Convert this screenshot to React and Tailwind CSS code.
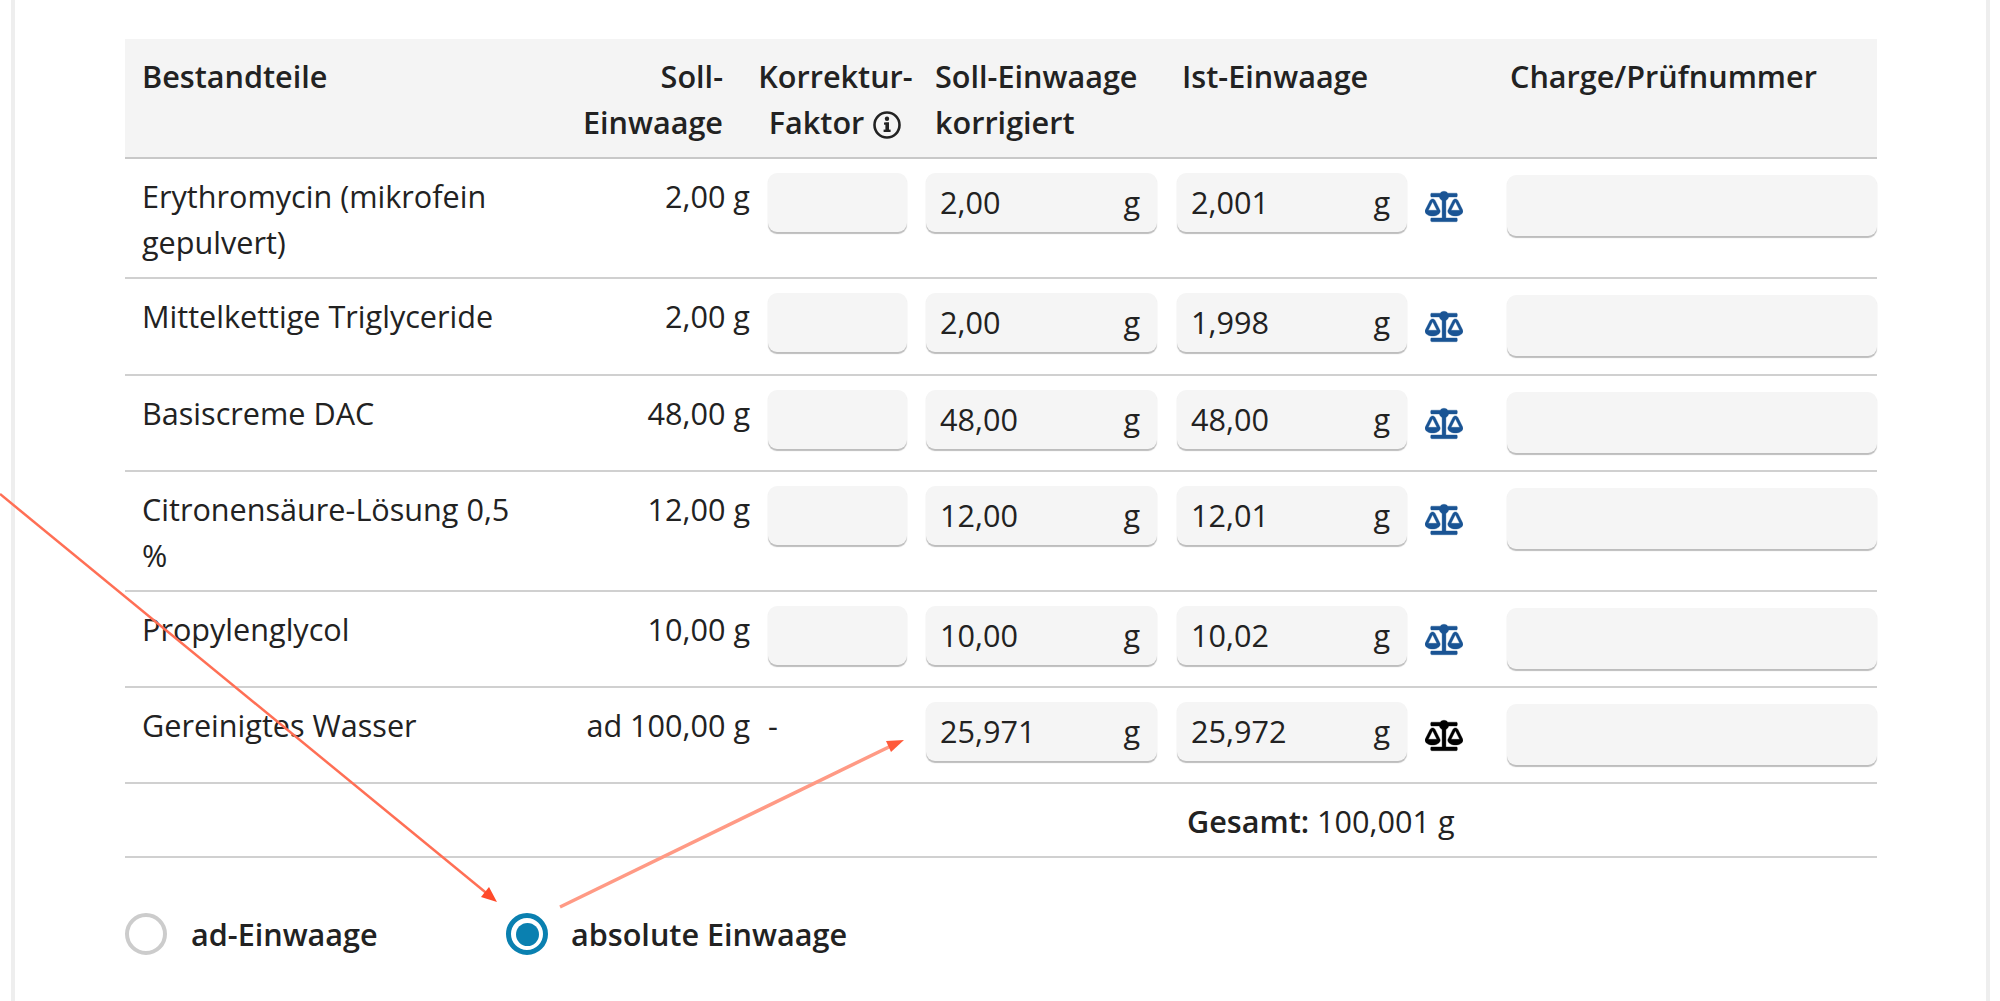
import { FaBalanceScale } from "react-icons/fa";

const rows = [
  { name: "Erythromycin (mikrofein gepulvert)", soll: "2,00 g", korr: "2,00", ist: "2,001", h: "h-[120px]" },
  { name: "Mittelkettige Triglyceride", soll: "2,00 g", korr: "2,00", ist: "1,998", h: "h-[97px]" },
  { name: "Basiscreme DAC", soll: "48,00 g", korr: "48,00", ist: "48,00", h: "h-[96px]" },
  { name: "Citronensäure-Lösung 0,5 %", soll: "12,00 g", korr: "12,00", ist: "12,01", h: "h-[120px]" },
  { name: "Propylenglycol", soll: "10,00 g", korr: "10,00", ist: "10,02", h: "h-[96px]" },
  { name: "Gereinigtes Wasser", soll: "ad 100,00 g", korr: "25,971", ist: "25,972", h: "h-[96px]", ad: true },
];

function InfoIcon() {
  return (
    <svg viewBox="0 0 30 30" className="inline-block w-[30px] h-[30px] ml-[8px] align-[-6px]">
      <circle cx="15" cy="15" r="12.5" fill="none" stroke="#222" strokeWidth="2.6" />
      <circle cx="15" cy="8.8" r="2.2" fill="#222" />
      <rect x="12" y="12.5" width="5" height="2.2" fill="#222" />
      <rect x="13.4" y="12.5" width="3.6" height="8.5" fill="#222" />
      <rect x="11.6" y="19.6" width="7" height="2.4" fill="#222" />
    </svg>
  );
}

function UnitInput({ value }) {
  return (
    <div className="flex items-center justify-between h-[59px] pb-[1px] pl-[14px] pr-[17px] rounded-[9px] bg-[#f5f5f5] shadow-[0_2px_1px_#bdbdbd]">
      <span>{value}</span>
      <span>g</span>
    </div>
  );
}

function Arrows() {
  return (
    <svg className="absolute inset-0 w-full h-full pointer-events-none" viewBox="0 0 2000 1001">
      <line x1="0" y1="494" x2="490" y2="896" stroke="#ff6f55" strokeWidth="2.5" />
      <polygon points="497,902 481,897 489,887" fill="#ff4a2a" />
      <line x1="560" y1="907" x2="893" y2="745" stroke="#ff9a85" strokeWidth="3.5" />
      <polygon points="904,740 891,752 886,741" fill="#ff5a3a" />
    </svg>
  );
}

export default function App() {
  return (
    <div className="relative h-[1001px] overflow-hidden bg-white font-['Open_Sans',sans-serif] text-[30.6px] leading-[46px] text-[#222]">
      <div className="ml-[11px] mr-[10px] h-full border-x-4 border-[#eeeeee] pl-[110px] pr-[109px] pt-[39px]">
        <table className="w-full table-fixed border-collapse">
          <colgroup>
            <col className="w-[415px]" />
            <col className="w-[210px]" />
            <col className="w-[166px]" />
            <col className="w-[251px]" />
            <col className="w-[250px]" />
            <col className="w-[73px]" />
            <col />
          </colgroup>
          <thead>
            <tr className="h-[119px] bg-[#f4f4f4] border-b-2 border-[#c8c8c8] align-top font-semibold">
              <th className="pl-[17px] pt-[14px] text-left font-semibold">Bestandteile</th>
              <th className="pr-[27px] pt-[14px] text-right font-semibold">Soll-<br />Einwaage</th>
              <th className="pl-[5px] pt-[14px] text-center font-semibold whitespace-nowrap">Korrektur-<br />Faktor<InfoIcon /></th>
              <th className="pl-[19px] pt-[14px] text-left font-semibold whitespace-nowrap">Soll-Einwaage<br />korrigiert</th>
              <th className="pl-[15px] pt-[14px] text-left font-semibold whitespace-nowrap">Ist-Einwaage</th>
              <th />
              <th className="pl-[20px] pt-[14px] text-left font-semibold whitespace-nowrap">Charge/Prüfnummer</th>
            </tr>
          </thead>
          <tbody>
            {rows.map((r) => (
              <tr key={r.name} className={`${r.h} border-b-2 border-[#d0d0d0] align-top`}>
                <td className="pl-[17px] pt-[14px] pr-[13px]">{r.name}</td>
                <td className="pt-[14px] text-right whitespace-nowrap">{r.soll}</td>
                <td className="pl-[18px] pr-[9px] pt-[14px]">
                  {r.ad ? <span>-</span> : <div className="h-[59px] rounded-[9px] bg-[#f5f5f5] shadow-[0_2px_1px_#bdbdbd]" />}
                </td>
                <td className="px-[10px] pt-[14px]"><UnitInput value={r.korr} /></td>
                <td className="px-[10px] pt-[14px]"><UnitInput value={r.ist} /></td>
                <td className="pl-[8px] pt-[31px]">
                  <FaBalanceScale
                    stroke="currentColor"
                    strokeWidth={6}
                    className={`w-[38px] h-[33px] ${r.ad ? "text-black" : "text-[#1a5494]"}`}
                  />
                </td>
                <td className="pl-[17px] pt-[16px]">
                  <div className="h-[61px] rounded-[9px] bg-[#f5f5f5] shadow-[0_2px_1px_#bdbdbd]" />
                </td>
              </tr>
            ))}
            <tr className="h-[74px] border-b-2 border-[#d0d0d0] align-top">
              <td colSpan={4} />
              <td colSpan={3} className="pl-[20px] pt-[14px] whitespace-nowrap">
                <span className="font-semibold">Gesamt:</span> 100,001 g
              </td>
            </tr>
          </tbody>
        </table>
        <div className="flex items-center mt-[53px] font-semibold">
          <label className="flex items-center w-[381px]">
            <span className="w-[42px] h-[42px] rounded-full border-4 border-[#cccccc]" />
            <span className="ml-[24px]">ad-Einwaage</span>
          </label>
          <label className="flex items-center">
            <span className="flex items-center justify-center w-[42px] h-[42px] rounded-full border-[5px] border-[#0a80b0]">
              <span className="w-[23px] h-[23px] rounded-full bg-[#0a80b0]" />
            </span>
            <span className="ml-[23px]">absolute Einwaage</span>
          </label>
        </div>
      </div>
      <Arrows />
    </div>
  );
}
